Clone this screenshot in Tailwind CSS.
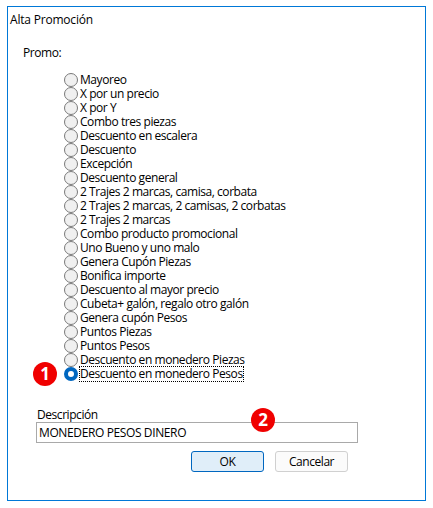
<!DOCTYPE html>
<html><head><meta charset="utf-8"><script src="https://cdn.jsdelivr.net/npm/@tailwindcss/browser@4"></script></head>
<body class="bg-white">
<div class="relative w-[433px] h-[508px] bg-white pt-[6px] pl-[7px] font-['Open_Sans',sans-serif] text-[12px] leading-[14px] text-black tracking-[-0.44px]">
  <div class="relative w-[419px] h-[495px] border border-[#0078d7] flex flex-col">
    <div class="pl-[2px] pt-[6px] h-[14px] box-content tracking-[-0.2px]">Alta Promoción</div>
    <div class="pl-[15px] pt-[19px] box-content h-[14px]">Promo:</div>
    <div class="flex flex-col pl-[56px] pt-[13px]">
      <label class="flex items-center h-[14px]"><span class="shrink-0 w-[14px] h-[14px] rounded-full border border-[#7a7a7a] bg-[#f0f0f0] mr-[2px]"></span>Mayoreo</label>
      <label class="flex items-center h-[14px]"><span class="shrink-0 w-[14px] h-[14px] rounded-full border border-[#7a7a7a] bg-[#f0f0f0] mr-[2px]"></span>X por un precio</label>
      <label class="flex items-center h-[14px]"><span class="shrink-0 w-[14px] h-[14px] rounded-full border border-[#7a7a7a] bg-[#f0f0f0] mr-[2px]"></span>X por Y</label>
      <label class="flex items-center h-[14px]"><span class="shrink-0 w-[14px] h-[14px] rounded-full border border-[#7a7a7a] bg-[#f0f0f0] mr-[2px]"></span>Combo tres piezas</label>
      <label class="flex items-center h-[14px]"><span class="shrink-0 w-[14px] h-[14px] rounded-full border border-[#7a7a7a] bg-[#f0f0f0] mr-[2px]"></span>Descuento en escalera</label>
      <label class="flex items-center h-[14px]"><span class="shrink-0 w-[14px] h-[14px] rounded-full border border-[#7a7a7a] bg-[#f0f0f0] mr-[2px]"></span>Descuento</label>
      <label class="flex items-center h-[14px]"><span class="shrink-0 w-[14px] h-[14px] rounded-full border border-[#7a7a7a] bg-[#f0f0f0] mr-[2px]"></span>Excepción</label>
      <label class="flex items-center h-[14px]"><span class="shrink-0 w-[14px] h-[14px] rounded-full border border-[#7a7a7a] bg-[#f0f0f0] mr-[2px]"></span>Descuento general</label>
      <label class="flex items-center h-[14px]"><span class="shrink-0 w-[14px] h-[14px] rounded-full border border-[#7a7a7a] bg-[#f0f0f0] mr-[2px]"></span>2 Trajes 2 marcas, camisa, corbata</label>
      <label class="flex items-center h-[14px]"><span class="shrink-0 w-[14px] h-[14px] rounded-full border border-[#7a7a7a] bg-[#f0f0f0] mr-[2px]"></span>2 Trajes 2 marcas, 2 camisas, 2 corbatas</label>
      <label class="flex items-center h-[14px]"><span class="shrink-0 w-[14px] h-[14px] rounded-full border border-[#7a7a7a] bg-[#f0f0f0] mr-[2px]"></span>2 Trajes 2 marcas</label>
      <label class="flex items-center h-[14px]"><span class="shrink-0 w-[14px] h-[14px] rounded-full border border-[#7a7a7a] bg-[#f0f0f0] mr-[2px]"></span>Combo producto promocional</label>
      <label class="flex items-center h-[14px]"><span class="shrink-0 w-[14px] h-[14px] rounded-full border border-[#7a7a7a] bg-[#f0f0f0] mr-[2px]"></span>Uno Bueno y uno malo</label>
      <label class="flex items-center h-[14px]"><span class="shrink-0 w-[14px] h-[14px] rounded-full border border-[#7a7a7a] bg-[#f0f0f0] mr-[2px]"></span>Genera Cupón Piezas</label>
      <label class="flex items-center h-[14px]"><span class="shrink-0 w-[14px] h-[14px] rounded-full border border-[#7a7a7a] bg-[#f0f0f0] mr-[2px]"></span>Bonifica importe</label>
      <label class="flex items-center h-[14px]"><span class="shrink-0 w-[14px] h-[14px] rounded-full border border-[#7a7a7a] bg-[#f0f0f0] mr-[2px]"></span>Descuento al mayor precio</label>
      <label class="flex items-center h-[14px]"><span class="shrink-0 w-[14px] h-[14px] rounded-full border border-[#7a7a7a] bg-[#f0f0f0] mr-[2px]"></span>Cubeta+ galón, regalo otro galón</label>
      <label class="flex items-center h-[14px]"><span class="shrink-0 w-[14px] h-[14px] rounded-full border border-[#7a7a7a] bg-[#f0f0f0] mr-[2px]"></span>Genera cupón Pesos</label>
      <label class="flex items-center h-[14px]"><span class="shrink-0 w-[14px] h-[14px] rounded-full border border-[#7a7a7a] bg-[#f0f0f0] mr-[2px]"></span>Puntos Piezas</label>
      <label class="flex items-center h-[14px]"><span class="shrink-0 w-[14px] h-[14px] rounded-full border border-[#7a7a7a] bg-[#f0f0f0] mr-[2px]"></span>Puntos Pesos</label>
      <label class="flex items-center h-[14px]"><span class="shrink-0 w-[14px] h-[14px] rounded-full border border-[#7a7a7a] bg-[#f0f0f0] mr-[2px]"></span>Descuento en monedero Piezas</label>
      <label class="flex items-center h-[14px]"><span class="shrink-0 w-[14px] h-[14px] rounded-full border-[4px] border-[#0067c0] bg-white mr-[2px]"></span><span class="outline-1 outline-dotted outline-black">Descuento en monedero Pesos</span></label>
    </div>
    <div class="pl-[29px] pt-[27px] h-[14px] box-content">Descripción</div>
    <div class="ml-[28px] mt-0 w-[322px] h-[21px] border border-[#a9a9a9] flex items-center pl-[2px] tracking-[-0.38px]">MONEDERO PESOS DINERO</div>
    <div class="flex ml-[183px] mt-[8px] gap-[11px]">
      <button class="w-[73px] h-[21px] rounded-[3px] border border-[#0067c0] bg-[#e0eef9] flex items-center justify-center">OK</button>
      <button class="w-[73px] h-[21px] rounded-[3px] border border-[#d0d0d0] bg-[#fbfbfb] flex items-center justify-center">Cancelar</button>
    </div>
    <div class="absolute left-[25px] top-[355px] w-[24px] h-[24px] rounded-full bg-[#f00000] text-white font-bold text-[17px] flex items-center justify-center">1</div>
    <div class="absolute left-[243px] top-[401px] w-[24px] h-[24px] rounded-full bg-[#f00000] text-white font-bold text-[17px] flex items-center justify-center">2</div>
  </div>
</div>
</body></html>
